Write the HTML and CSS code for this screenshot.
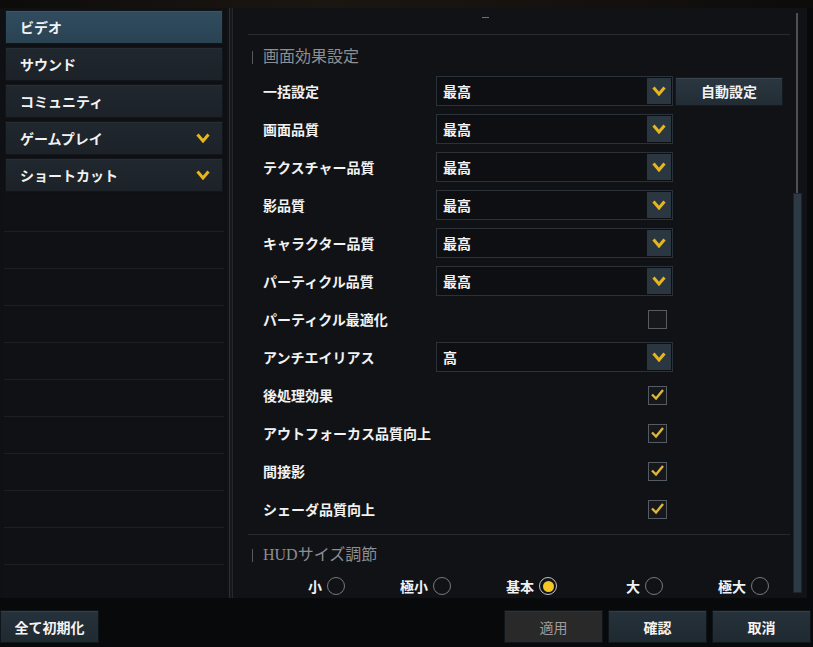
FILE: index.html
```html
<!DOCTYPE html>
<html lang="ja">

<head>
  <meta charset="UTF-8" />
  <meta name="viewport" content="width=device-width, initial-scale=1.0" />
  <title>設定</title>
  <link rel="stylesheet" href="styles.css">
</head>

<body>
  <div class="topbar"></div>
  <div class="window">
    <nav class="side">
      <div class="menu-item active"><span>ビデオ</span></div>
      <div class="menu-item"><span>サウンド</span></div>
      <div class="menu-item"><span>コミュニティ</span></div>
      <div class="menu-item"><span>ゲームプレイ</span>
        <svg class="chev" viewBox="0 0 14 10"><polyline points="1.5,1.5 7,8 12.5,1.5" /></svg>
      </div>
      <div class="menu-item"><span>ショートカット</span>
        <svg class="chev" viewBox="0 0 14 10"><polyline points="1.5,1.5 7,8 12.5,1.5" /></svg>
      </div>
      <div class="empty-row"></div>
      <div class="empty-row"></div>
      <div class="empty-row"></div>
      <div class="empty-row"></div>
      <div class="empty-row"></div>
      <div class="empty-row"></div>
      <div class="empty-row"></div>
      <div class="empty-row"></div>
      <div class="empty-row"></div>
      <div class="empty-row"></div>
      <div class="empty-row"></div>
    </nav>
    <div class="split"></div>
    <section class="pane">
      <div class="content">
        <div class="pane-top"><i class="dash"></i></div>

        <h3 class="group-title">画面効果設定</h3>

        <div class="row">
          <label>一括設定</label>
          <div class="select"><span>最高</span><b class="arrow"><svg viewBox="0 0 14 10"><polyline points="1.5,1.5 7,8 12.5,1.5" /></svg></b></div>
          <button class="auto-btn">自動設定</button>
        </div>
        <div class="row">
          <label>画面品質</label>
          <div class="select"><span>最高</span><b class="arrow"><svg viewBox="0 0 14 10"><polyline points="1.5,1.5 7,8 12.5,1.5" /></svg></b></div>
        </div>
        <div class="row">
          <label>テクスチャー品質</label>
          <div class="select"><span>最高</span><b class="arrow"><svg viewBox="0 0 14 10"><polyline points="1.5,1.5 7,8 12.5,1.5" /></svg></b></div>
        </div>
        <div class="row">
          <label>影品質</label>
          <div class="select"><span>最高</span><b class="arrow"><svg viewBox="0 0 14 10"><polyline points="1.5,1.5 7,8 12.5,1.5" /></svg></b></div>
        </div>
        <div class="row">
          <label>キャラクター品質</label>
          <div class="select"><span>最高</span><b class="arrow"><svg viewBox="0 0 14 10"><polyline points="1.5,1.5 7,8 12.5,1.5" /></svg></b></div>
        </div>
        <div class="row">
          <label>パーティクル品質</label>
          <div class="select"><span>最高</span><b class="arrow"><svg viewBox="0 0 14 10"><polyline points="1.5,1.5 7,8 12.5,1.5" /></svg></b></div>
        </div>
        <div class="row">
          <label>パーティクル最適化</label>
          <div class="check-cell"><i class="check"></i></div>
        </div>
        <div class="row">
          <label>アンチエイリアス</label>
          <div class="select"><span>高</span><b class="arrow"><svg viewBox="0 0 14 10"><polyline points="1.5,1.5 7,8 12.5,1.5" /></svg></b></div>
        </div>
        <div class="row">
          <label>後処理効果</label>
          <div class="check-cell"><i class="check on"><svg viewBox="0 0 19 19"><polyline points="4,9.5 8,13.5 15,5" /></svg></i></div>
        </div>
        <div class="row">
          <label>アウトフォーカス品質向上</label>
          <div class="check-cell"><i class="check on"><svg viewBox="0 0 19 19"><polyline points="4,9.5 8,13.5 15,5" /></svg></i></div>
        </div>
        <div class="row">
          <label>間接影</label>
          <div class="check-cell"><i class="check on"><svg viewBox="0 0 19 19"><polyline points="4,9.5 8,13.5 15,5" /></svg></i></div>
        </div>
        <div class="row">
          <label>シェーダ品質向上</label>
          <div class="check-cell"><i class="check on"><svg viewBox="0 0 19 19"><polyline points="4,9.5 8,13.5 15,5" /></svg></i></div>
        </div>

        <hr class="sep">

        <h3 class="group-title">HUDサイズ調節</h3>

        <div class="radios">
          <div class="radio"><span>小</span><i class="dot"></i></div>
          <div class="radio"><span>極小</span><i class="dot"></i></div>
          <div class="radio"><span>基本</span><i class="dot on"></i></div>
          <div class="radio"><span>大</span><i class="dot"></i></div>
          <div class="radio"><span>極大</span><i class="dot"></i></div>
        </div>
      </div>
      <div class="scrollbar">
        <div class="track"></div>
        <div class="thumb"></div>
      </div>
    </section>
  </div>
  <footer class="actions">
    <button class="btn">全て初期化</button>
    <div class="right-btns">
      <button class="btn disabled">適用</button>
      <button class="btn">確認</button>
      <button class="btn">取消</button>
    </div>
  </footer>
</body>

</html>
```

FILE: styles.css
```css
body {
  margin: 0;
  width: 813px;
  height: 647px;
  overflow: hidden;
  background: #08090b;
  color: #f2f2f2;
  font-family: "Noto Sans CJK JP", "Noto Sans", sans-serif;
  font-size: 14px;
  font-weight: 700;
}

.topbar {
  height: 8px;
  background: linear-gradient(90deg, #0d0c0b, #1c1611 40%, #15110e 70%, #0d0c0b);
}

.window {
  display: flex;
  height: 590px;
  width: 807px;
  background: #111216;
}

/* left menu */
.side {
  flex: none;
  width: 227px;
  box-sizing: border-box;
  padding: 2px 3px 0 4px;
  display: flex;
  flex-direction: column;
  overflow: hidden;
  background: #0f1013;
}

.menu-item {
  flex: none;
  height: 34px;
  margin: 0 0 3px 1px;
  width: 218px;
  box-sizing: border-box;
  padding: 0 14px;
  display: flex;
  align-items: center;
  justify-content: space-between;
  background: linear-gradient(#20272e, #1c2228);
  border: 1px solid #121519;
  box-shadow: inset 0 1px 0 #262e35;
  line-height: 1;
}

.menu-item.active {
  background: linear-gradient(#304c5e, #2a4353);
  box-shadow: inset 0 1px 0 #3a5668;
}

.chev {
  width: 14px;
  height: 10px;
  margin-right: -2px;
}

.chev polyline,
.arrow polyline {
  fill: none;
  stroke: #e8b51d;
  stroke-width: 3;
  stroke-linejoin: miter;
}

.empty-row {
  flex: none;
  height: 36px;
  border-bottom: 1px solid #1d1f24;
  background: #101115;
}

.split {
  flex: none;
  width: 8px;
  background:
    linear-gradient(90deg, transparent 2px, #2c2f34 2px, #2c2f34 3px, #16171b 3px, #16171b 5px, #24272b 5px, #24272b 6px, transparent 6px);
}

/* right pane */
.pane {
  flex: 1;
  min-width: 0;
  display: flex;
  padding: 0 5px 0 13px;
  background: #111216;
}

.content {
  flex: 1;
  min-width: 0;
}

.pane-top {
  height: 27px;
  border-bottom: 1px solid #272b30;
  padding-left: 234px;
  box-sizing: border-box;
  padding-top: 9px;
}

.dash {
  display: block;
  width: 7px;
  height: 1px;
  background: #6d7075;
}

.group-title {
  position: relative;
  margin: 10px 0 3px 3px;
  height: 24px;
  line-height: 24px;
  padding-left: 12px;
  font-family: "Liberation Serif", "Noto Sans CJK JP", serif;
  font-weight: 400;
  font-size: 16px;
  color: #8b8e92;
}

.group-title::before {
  content: "";
  position: absolute;
  left: 1px;
  top: 6px;
  width: 1px;
  height: 13px;
  background: #55585d;
}

.row {
  height: 38px;
  display: flex;
  align-items: center;
}

.row label {
  flex: none;
  width: 173px;
  padding-left: 15px;
  white-space: nowrap;
}

.select {
  flex: none;
  width: 237px;
  height: 30px;
  box-sizing: border-box;
  border: 1px solid #2b3138;
  background: #0d0f13;
  display: flex;
  align-items: center;
  justify-content: space-between;
  padding: 0 1px 0 6px;
}

.arrow {
  width: 24px;
  height: 26px;
  background: #2a3640;
  display: flex;
  align-items: center;
  justify-content: center;
}

.arrow svg {
  width: 14px;
  height: 10px;
}

.auto-btn {
  flex: none;
  margin-left: 2px;
  width: 108px;
  height: 29px;
  border: 1px solid #151a1f;
  background: linear-gradient(#2b3741, #222c34);
  box-shadow: inset 0 1px 0 #38444e;
  color: #f2f2f2;
  font: inherit;
}

.check-cell {
  flex: none;
  width: 237px;
  display: flex;
  justify-content: flex-end;
  padding-right: 6px;
  box-sizing: border-box;
}

.check {
  display: block;
  width: 19px;
  height: 19px;
  box-sizing: border-box;
  border: 1.5px solid #555b62;
  background: #16181c;
}

.check svg {
  display: block;
  width: 19px;
  height: 19px;
  margin: -1.5px;
}

.check polyline {
  fill: none;
  stroke: #dbb73c;
  stroke-width: 2.4;
}

.sep {
  margin: 6px 0 0 0;
  border: 0;
  border-top: 1px solid #262a2f;
  height: 0;
}

.sep + .group-title {
  margin-top: 8px;
}

.radios {
  margin-top: 7px;
  height: 24px;
  display: grid;
  grid-template-columns: repeat(5, 106px);
  justify-content: end;
  padding-right: 21px;
}

.radio {
  display: flex;
  align-items: center;
  justify-content: flex-end;
  gap: 5px;
}

.dot {
  width: 18px;
  height: 18px;
  box-sizing: border-box;
  border: 1.5px solid #73787e;
  border-radius: 50%;
  display: flex;
  align-items: center;
  justify-content: center;
}

.dot.on {
  border-color: #c4c4c4;
}

.dot.on::after {
  content: "";
  width: 11px;
  height: 11px;
  border-radius: 50%;
  background: #f2c624;
}

.scrollbar {
  flex: none;
  width: 9px;
  margin-left: 3px;
  padding: 5px 0 5px;
  display: flex;
  flex-direction: column;
}

.track {
  height: 180px;
  background: linear-gradient(90deg, transparent 3px, #4b5056 3px, #4b5056 5px, transparent 5px);
}

.thumb {
  flex: 1;
  background: #2c3a45;
  border: 1px solid #1d252c;
}

/* footer */
.actions {
  display: flex;
  padding-top: 12px;
}

.btn {
  height: 33px;
  width: 99px;
  border: 1px solid #10151a;
  background: linear-gradient(#26323c, #1f2930);
  box-shadow: inset 0 1px 0 #313d47;
  color: #f4f4f4;
  font: inherit;
  padding: 0;
}

.right-btns {
  margin-left: auto;
  display: flex;
  gap: 5px;
  padding-right: 2px;
}

.btn.disabled {
  background: #29292a;
  box-shadow: inset 0 1px 0 #323233;
  color: #9c9c9c;
  font-weight: 400;
}
```
